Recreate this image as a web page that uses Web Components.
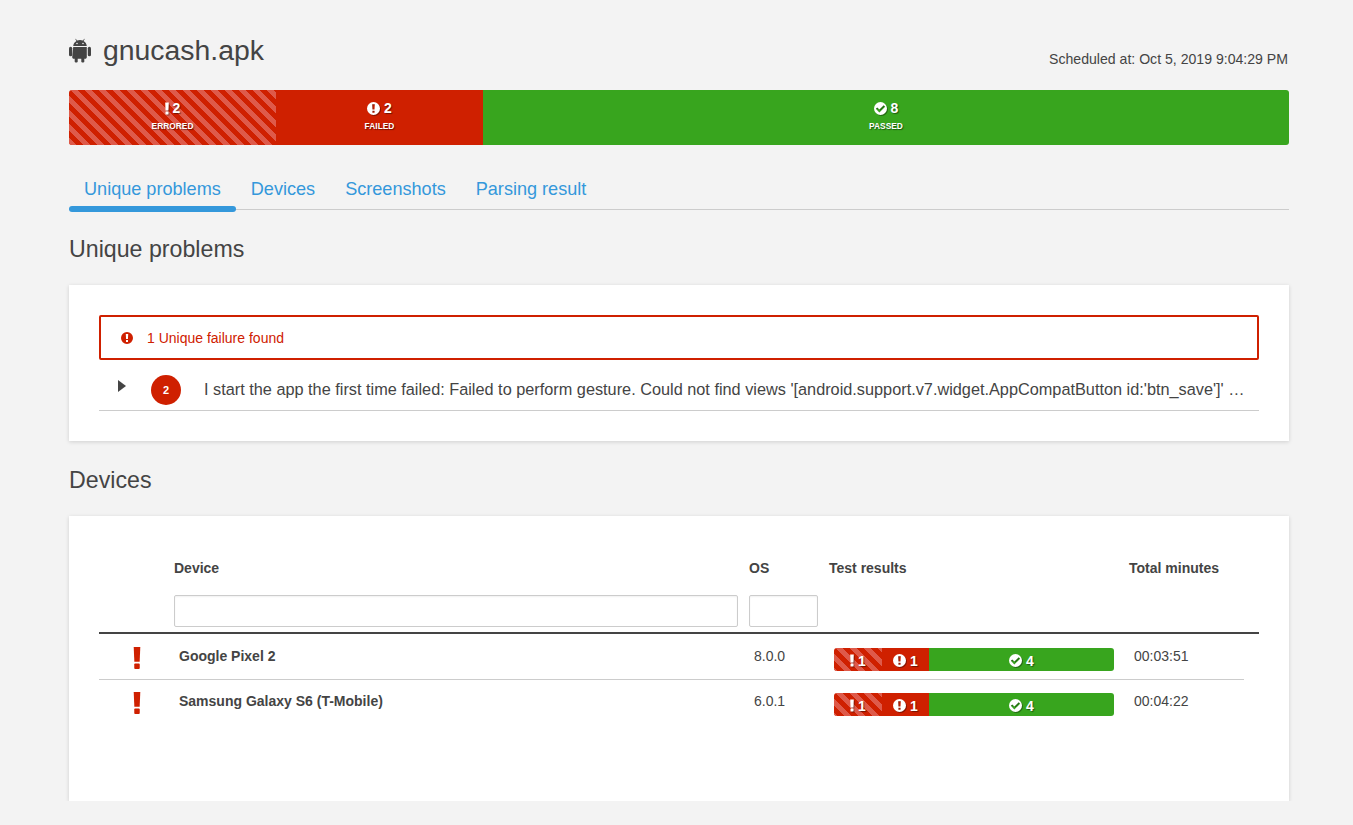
<!DOCTYPE html>
<html>
<head>
<meta charset="utf-8">
<title>gnucash.apk</title>
<style>
  html, body { margin: 0; background: #f3f3f3; }
  body { font-family: "Liberation Sans", Arial, sans-serif; color: #444; --red: #cf2000; --green: #38a51e; --blue: #3498db; --cols: 75px 575px 80px 300px 1fr; }
</style>
</head>
<body>
<report-page>
  <report-header name="gnucash.apk" scheduled="Scheduled at: Oct 5, 2019 9:04:29 PM"></report-header>
  <summary-bar errored="2" failed="2" passed="8"></summary-bar>
  <tab-bar>
    <tab-link active>Unique problems</tab-link>
    <tab-link>Devices</tab-link>
    <tab-link>Screenshots</tab-link>
    <tab-link>Parsing result</tab-link>
  </tab-bar>
  <report-section title="Unique problems">
    <alert-box>1 Unique failure found</alert-box>
    <problem-row count="2">I start the app the first time failed: Failed to perform gesture. Could not find views '[android.support.v7.widget.AppCompatButton id:'btn_save']' …</problem-row>
  </report-section>
  <report-section title="Devices" style="--card-height: 285px">
    <device-head></device-head>
    <device-row name="Google Pixel 2" os="8.0.0" time="00:03:51"></device-row>
    <device-row name="Samsung Galaxy S6 (T-Mobile)" os="6.0.1" time="00:04:22" last></device-row>
  </report-section>
</report-page>

<script>
// shared icons, the bars and the alert all use them
const ICONS = {
  bang: `<svg viewBox="0 0 8 24" fill="currentColor"><path d="M0.4 0h7.2l-0.7 16h-5.8z"/><rect x="1" y="18" width="6" height="6" rx="1"/></svg>`,
  alert: `<svg viewBox="0 0 24 24"><path fill="currentColor" fill-rule="evenodd" d="M12 0a12 12 0 1 0 0 24a12 12 0 0 0 0-24zM9.6 4h4.8l-.5 10h-3.8zM10 16.2h4v3.8h-4z"/></svg>`,
  check: `<svg viewBox="0 0 24 24"><path fill="currentColor" fill-rule="evenodd" d="M12 0a12 12 0 1 0 0 24a12 12 0 0 0 0-24zM10 19.2l-6.6-6.6 2.6-2.6 4 4 8-8 2.6 2.6z"/></svg>`,
  android: `<svg viewBox="0 0 22 24" fill="currentColor">
    <path fill-rule="evenodd" d="M4.2 7.6C4.4 5.2 5.6 3.4 7.4 2.4L6.3 .5 6.8 .2 8 2.1C9 1.7 10 1.5 11 1.5s2 .2 3 .6L15.2 .2l.5 .3-1.1 1.9c1.8 1 3 2.8 3.2 5.2zM8 4.2a.8 .8 0 1 0 0 1.6a.8 .8 0 0 0 0-1.6zM14 4.2a.8 .8 0 1 0 0 1.6a.8 .8 0 0 0 0-1.6z"/>
    <path d="M4.2 8.4h13.6v10.4c0 .9-.7 1.5-1.5 1.5h-1v3c0 .5-.7 .7-1.5 .7s-1.5-.2-1.5-.7v-3h-3.6v3c0 .5-.7 .7-1.5 .7s-1.5-.2-1.5-.7v-3h-1c-.8 0-1.5-.6-1.5-1.5z"/>
    <rect x="0" y="8.2" width="3.2" height="9.6" rx="1.6"/>
    <rect x="18.8" y="8.2" width="3.2" height="9.6" rx="1.6"/>
  </svg>`,
};

const STRIPES = `background-color: var(--red); background-image: linear-gradient(45deg, #de5a4a 25%, transparent 25%, transparent 50%, #de5a4a 50%, #de5a4a 75%, transparent 75%); background-size: 14px 14px; background-position: 2px 0;`;

class ReportPage extends HTMLElement {
  constructor() {
    super();
    this.attachShadow({ mode: 'open' });
    this.shadowRoot.innerHTML = `
      <style>
        :host { display: block; box-sizing: border-box; width: 1220px; margin-left: 69px; padding-top: 32px; }
      </style>
      <slot></slot>
    `;
  }
}

class ReportHeader extends HTMLElement {
  constructor() {
    super();
    this.attachShadow({ mode: 'open' });
    this.shadowRoot.innerHTML = `
      <style>
        :host { display: flex; justify-content: space-between; height: 58px; }
        .name { display: flex; align-items: center; height: 36px; font-size: 28.4px; gap: 12px; color: #444; }
        .icon { width: 22px; height: 25px; margin-top: 1px; color: #444; display: flex; }
        svg { width: 100%; height: 100%; display: block; }
        .when { font-size: 14.1px; margin-top: 19px; line-height: 16px; margin-right: 1px; }
      </style>
      <div class="name"><span class="icon">${ICONS.android}</span><span>${this.getAttribute('name')}</span></div>
      <div class="when">${this.getAttribute('scheduled')}</div>
    `;
  }
}

class SummaryBar extends HTMLElement {
  constructor() {
    super();
    this.attachShadow({ mode: 'open' });
    const seg = (cls, icon, n, label) => `
      <div class="seg ${cls}">
        <div class="top"><span class="i ${cls}-i">${icon}</span><b>${n}</b></div>
        <div class="label">${label}</div>
      </div>`;
    this.shadowRoot.innerHTML = `
      <style>
        :host { display: grid; grid-template-columns: 207px 207px 1fr; height: 55px; border-radius: 3px; overflow: hidden; }
        .seg { display: flex; flex-direction: column; align-items: center; color: #fff; text-shadow: 1px 1px 1px rgba(0,0,0,.45); padding-top: 10px; }
        .errored { ${STRIPES} }
        .failed { background: var(--red); }
        .passed { background: var(--green); }
        .top { display: flex; align-items: center; gap: 4px; height: 16px; font-size: 14px; }
        .i { display: flex; width: 13px; height: 13px; filter: drop-shadow(1px 1px 0 rgba(0,0,0,.35)); }
        .errored-i { width: 4px; }
        .label { font-size: 8.4px; font-weight: bold; line-height: 10px; margin-top: 5px; }
        svg { width: 100%; height: 100%; display: block; }
      </style>
      ${seg('errored', ICONS.bang, this.getAttribute('errored'), 'ERRORED')}
      ${seg('failed', ICONS.alert, this.getAttribute('failed'), 'FAILED')}
      ${seg('passed', ICONS.check, this.getAttribute('passed'), 'PASSED')}
    `;
  }
}

class TabBar extends HTMLElement {
  constructor() {
    super();
    this.attachShadow({ mode: 'open' });
    this.shadowRoot.innerHTML = `
      <style>
        :host { display: flex; margin-top: 22px; height: 42px; border-bottom: 1px solid #ccc; box-sizing: content-box; }
      </style>
      <slot></slot>
    `;
  }
}

class TabLink extends HTMLElement {
  constructor() {
    super();
    this.attachShadow({ mode: 'open' });
    this.shadowRoot.innerHTML = `
      <style>
        :host { display: block; position: relative; padding: 0 15px; font-size: 18.1px; line-height: 44px; color: var(--blue); white-space: nowrap; }
        :host([active])::after { content: ""; position: absolute; left: 0; right: 0; bottom: -3px; height: 6px; border-radius: 3px; background: var(--blue); }
      </style>
      <slot></slot>
    `;
  }
}

class ReportSection extends HTMLElement {
  constructor() {
    super();
    this.attachShadow({ mode: 'open' });
    this.shadowRoot.innerHTML = `
      <style>
        :host { display: block; }
        h2 { margin: 0; font-weight: normal; font-size: 23.2px; line-height: 26px; padding-top: 26px; height: 49px; color: #444; }
        .card { background: #fff; box-shadow: 0 1px 4px rgba(0,0,0,.15); padding: 30px; height: var(--card-height, auto); box-sizing: border-box; }
      </style>
      <h2>${this.getAttribute('title')}</h2>
      <div class="card"><slot></slot></div>
    `;
    this.removeAttribute('title');
  }
}

class AlertBox extends HTMLElement {
  constructor() {
    super();
    this.attachShadow({ mode: 'open' });
    this.shadowRoot.innerHTML = `
      <style>
        :host { display: flex; align-items: center; box-sizing: border-box; height: 45px; border: 2px solid var(--red); border-radius: 2px; color: var(--red); font-size: 14px; padding-left: 20px; gap: 14px; }
        .i { width: 12px; height: 12px; display: flex; }
        svg { width: 100%; height: 100%; }
      </style>
      <span class="i">${ICONS.alert}</span><slot></slot>
    `;
  }
}

class ProblemRow extends HTMLElement {
  constructor() {
    super();
    this.attachShadow({ mode: 'open' });
    this.shadowRoot.innerHTML = `
      <style>
        :host { display: flex; height: 50px; border-bottom: 1px solid #ccc; color: #444; font-size: 16.3px; }
        .arrow { width: 0; height: 0; margin: 20px 0 0 19px; border-left: 8px solid #444; border-top: 6px solid transparent; border-bottom: 6px solid transparent; }
        .count { flex: none; width: 30px; height: 30px; margin: 15px 23px 0 25px; border-radius: 50%; background: var(--red); color: #fff; font-size: 11px; font-weight: bold; display: flex; align-items: center; justify-content: center; }
        .text { flex: 1; min-width: 0; margin-top: 19px; line-height: 20px; white-space: nowrap; }
      </style>
      <span class="arrow"></span>
      <span class="count">${this.getAttribute('count')}</span>
      <span class="text"><slot></slot></span>
    `;
  }
}

class DeviceHead extends HTMLElement {
  constructor() {
    super();
    this.attachShadow({ mode: 'open' });
    this.shadowRoot.innerHTML = `
      <style>
        :host { display: grid; grid-template-columns: var(--cols); height: 86px; margin-bottom: 1px; border-bottom: 2px solid #444; font-size: 14px; font-weight: bold; box-sizing: content-box; color: #444; }
        .c { padding-top: 14px; line-height: 16px; }
        .field { display: block; box-sizing: border-box; height: 32px; margin-top: 19px; background: #fff; border: 1px solid #ccc; border-radius: 2px; box-shadow: inset 0 1px 2px rgba(0,0,0,.06); }
        .device .field { width: 564px; }
        .os .field { width: 69px; }
      </style>
      <div class="c"></div>
      <div class="c device">Device<span class="field"></span></div>
      <div class="c os">OS<span class="field"></span></div>
      <div class="c">Test results</div>
      <div class="c">Total minutes</div>
    `;
  }
}

class ResultBar extends HTMLElement {
  constructor() {
    super();
    this.attachShadow({ mode: 'open' });
    const seg = (cls, icon, n) => `<div class="seg ${cls}"><span class="i ${cls}-i">${icon}</span><b>${n}</b></div>`;
    this.shadowRoot.innerHTML = `
      <style>
        :host { display: grid; grid-template-columns: 48px 47px 1fr; width: 280px; height: 23px; border-radius: 3px; overflow: hidden; }
        .seg { display: flex; align-items: center; justify-content: center; gap: 4px; padding-top: 2px; box-sizing: border-box; color: #fff; font-size: 14px; text-shadow: 1px 1px 1px rgba(0,0,0,.45); }
        .errored { ${STRIPES} }
        .failed { background: var(--red); }
        .passed { background: var(--green); }
        .i { display: flex; width: 13px; height: 13px; filter: drop-shadow(1px 1px 0 rgba(0,0,0,.35)); }
        .errored-i { width: 4px; }
        svg { width: 100%; height: 100%; display: block; }
      </style>
      ${seg('errored', ICONS.bang, 1)}
      ${seg('failed', ICONS.alert, 1)}
      ${seg('passed', ICONS.check, 4)}
    `;
  }
}

class DeviceRow extends HTMLElement {
  constructor() {
    super();
    this.attachShadow({ mode: 'open' });
    this.shadowRoot.innerHTML = `
      <style>
        :host { display: grid; grid-template-columns: 75px 575px 80px 300px 1fr; width: 1145px; height: 45px; font-size: 14px; color: #444; box-sizing: border-box; }
        :host(:not([last])) { border-bottom: 1px solid #ccc; }
        .flag { color: var(--red); width: 8px; height: 22px; margin: 12px 0 0 34px; }
        svg { width: 100%; height: 100%; display: block; }
        .t { padding: 13px 0 0 5px; line-height: 16px; }
        .name { font-weight: bold; }
        .bar { padding: 13px 0 0 5px; }
      </style>
      <div><div class="flag">${ICONS.bang}</div></div>
      <div class="t name">${this.getAttribute('name')}</div>
      <div class="t">${this.getAttribute('os')}</div>
      <div class="bar"><result-bar></result-bar></div>
      <div class="t">${this.getAttribute('time')}</div>
    `;
  }
}

customElements.define('report-page', ReportPage);
customElements.define('report-header', ReportHeader);
customElements.define('summary-bar', SummaryBar);
customElements.define('tab-bar', TabBar);
customElements.define('tab-link', TabLink);
customElements.define('report-section', ReportSection);
customElements.define('alert-box', AlertBox);
customElements.define('problem-row', ProblemRow);
customElements.define('device-head', DeviceHead);
customElements.define('result-bar', ResultBar);
customElements.define('device-row', DeviceRow);
</script>
</body>
</html>
